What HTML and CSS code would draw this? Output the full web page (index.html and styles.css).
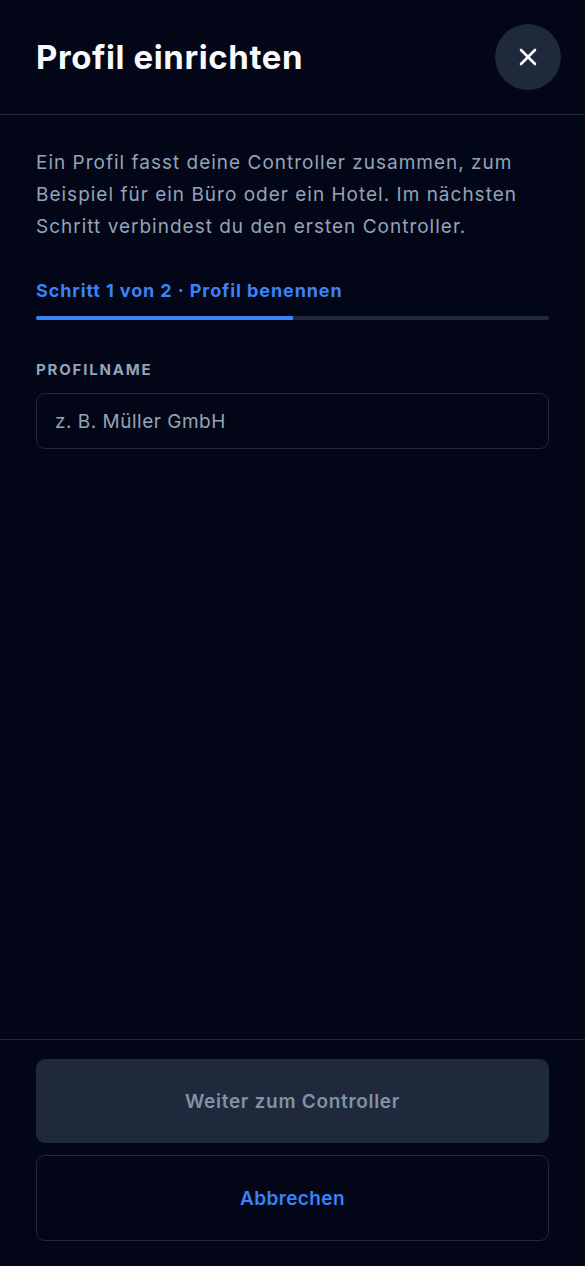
FILE: index.html
```html
<!DOCTYPE html>
<html lang="de">
<head>
<meta charset="utf-8">
<title>Profil einrichten</title>
<link rel="stylesheet" href="styles.css">
</head>
<body>
<div class="sheet">
  <header class="head">
    <h1 class="title">Profil einrichten</h1>
    <button class="close" aria-label="Schließen">
      <svg width="22" height="22" viewBox="0 0 22 22"><path d="M4 4L18 18M18 4L4 18" stroke="#ffffff" stroke-width="2.6" stroke-linecap="round"/></svg>
    </button>
  </header>
  <main class="body">
    <p class="intro">Ein Profil fasst deine Controller zusammen, zum Beispiel für ein Büro oder ein Hotel. Im nächsten Schritt verbindest du den ersten Controller.</p>
    <div class="step">Schritt 1 von 2 · Profil benennen</div>
    <div class="track"><div class="fill" style="width:50%"></div></div>
    <label class="label" for="name">Profilname</label>
    <input class="input" id="name" type="text" placeholder="z. B. Müller GmbH">
  </main>
  <footer class="foot">
    <button class="btn primary">Weiter zum Controller</button>
    <button class="btn ghost">Abbrechen</button>
  </footer>
</div>
</body>
</html>
```
FILE: styles.css
```css
* { box-sizing: border-box; }
html, body { margin: 0; height: 100%; }
body {
  background: #020617;
  font-family: "Inter", "Noto Sans", sans-serif;
  color: #e2e8f0;
}
.sheet {
  display: flex;
  flex-direction: column;
  height: 1266px;
}
.head {
  display: flex;
  align-items: center;
  justify-content: space-between;
  height: 115px;
  padding: 0 24px 0 36px;
  border-bottom: 1px solid #1e293b;
}
.title {
  margin: 0;
  font-size: 33px;
  font-weight: 700;
  color: #f8fafc;
  letter-spacing: 0.6px;
}
.close {
  width: 66px;
  height: 66px;
  border-radius: 50%;
  border: none;
  background: #1e293b;
  display: flex;
  align-items: center;
  justify-content: center;
  padding: 0;
}
.body {
  flex: 1;
  padding: 32px 36px 0;
  display: flex;
  flex-direction: column;
}
.intro {
  margin: 0;
  font-size: 19px;
  line-height: 32px;
  letter-spacing: 1px;
  color: #94a3b8;
}
.step {
  margin-top: 36px;
  font-size: 18px;
  font-weight: 700;
  letter-spacing: 0.9px;
  color: #3b82f6;
  line-height: 24px;
}
.track {
  margin-top: 13px;
  height: 4px;
  background: #1e293b;
  border-radius: 2px;
  overflow: hidden;
}
.fill { height: 100%; background: #3b82f6; }
.label {
  margin-top: 40px;
  font-size: 15px;
  font-weight: 700;
  letter-spacing: 1.8px;
  text-transform: uppercase;
  color: #94a3b8;
  line-height: 20px;
}
.input {
  margin-top: 13px;
  height: 56px;
  border: 1px solid #1e293b;
  border-radius: 9px;
  background: #020617;
  padding: 0 18px;
  font-family: inherit;
  font-size: 19px;
  letter-spacing: 0.5px;
  color: #e2e8f0;
}
.input::placeholder { color: #94a3b8; }
.foot {
  border-top: 1px solid #1e293b;
  padding: 19px 36px 25px;
  display: flex;
  flex-direction: column;
  gap: 12px;
}
.btn {
  height: 84px;
  border-radius: 9px;
  font-family: inherit;
  font-size: 19px;
  font-weight: 600;
  letter-spacing: 0.7px;
}
.primary { background: #1e293b; border: none; color: #8391a6; }
.ghost { height: 86px; background: transparent; border: 1px solid #1e293b; color: #3b82f6; letter-spacing: 0.4px; }
```
